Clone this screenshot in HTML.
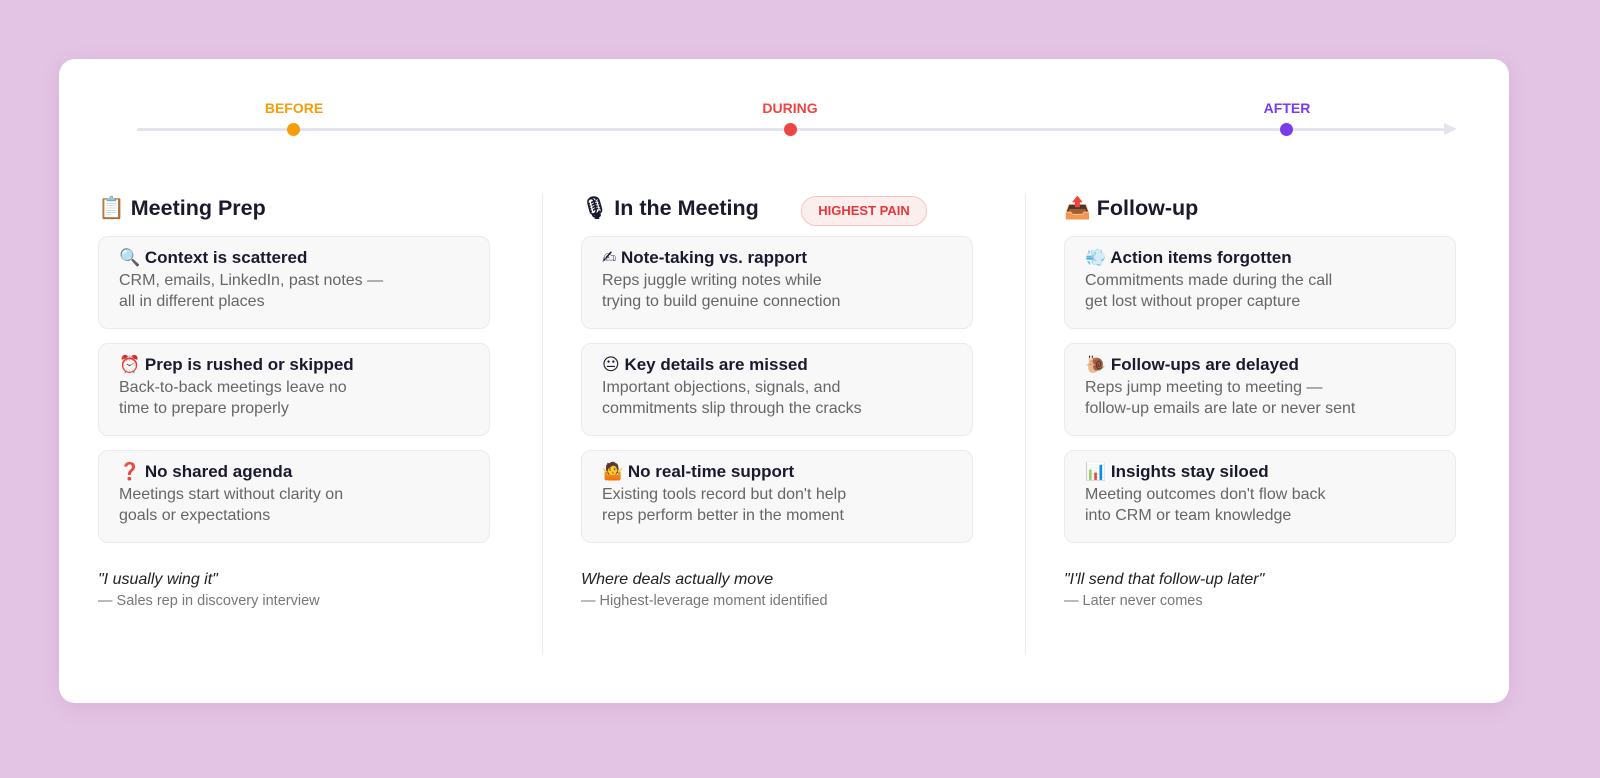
<!DOCTYPE html>
<html><head><meta charset="utf-8"><style>
*{margin:0;padding:0;box-sizing:border-box}
body{width:1600px;height:778px;background:#e4c4e4;font-family:"Liberation Sans","DejaVu Sans",sans-serif;position:relative;overflow:hidden}
.card{position:absolute;left:59px;top:59px;width:1450px;height:644px;background:#fff;border-radius:16px;box-shadow:0 4px 20px rgba(120,60,120,.12)}
.line{position:absolute;left:137px;top:128px;width:1310px;height:3px;background:#e5e3ee}
.arrow{position:absolute;left:1444px;top:123px;width:0;height:0;border-left:13px solid #e5e3ee;border-top:6px solid transparent;border-bottom:6px solid transparent}
.dot{position:absolute;top:123px;width:13px;height:13px;border-radius:50%}
.lab{position:absolute;top:100px;font-size:14px;font-weight:bold;width:120px;text-align:center}
.col{position:absolute;top:194px;width:392px}
.h{font-size:21.5px;font-weight:bold;color:#1a1a2e;height:28px;line-height:28px}
.c{margin-top:14px;height:93px;background:#f8f8f9;border:1px solid #ebebee;border-radius:10px;padding:10px 20px}
.col .c:first-of-type{margin-top:14px}
.t{font-size:17px;font-weight:bold;color:#1a1a2e;line-height:22px}
.d{font-size:16px;color:#666;line-height:21px;margin-top:1px}
.q{margin-top:27px;font-size:16px;font-style:italic;color:#222;line-height:20px}
.a{font-size:14.5px;color:#777;line-height:22px}
.div{position:absolute;top:193px;width:1px;height:462px;background:#ececf0}
.badge{position:absolute;left:801px;top:196px;width:126px;height:30px;border-radius:15px;background:#fdeeee;border:1px solid #f6c3c3;color:#e5383b;font-size:13px;font-weight:bold;text-align:center;line-height:28px}
</style></head><body>
<div class="card"></div>
<div class="line"></div><div class="arrow"></div>
<div class="lab" style="left:234px;color:#f59e0b">BEFORE</div>
<div class="lab" style="left:730px;color:#ef4444">DURING</div>
<div class="lab" style="left:1227px;color:#7c3aed">AFTER</div>
<div class="dot" style="left:287px;background:#f59e0b"></div>
<div class="dot" style="left:784px;background:#ef4444"></div>
<div class="dot" style="left:1280px;background:#7c3aed"></div>
<div class="div" style="left:542px"></div>
<div class="div" style="left:1025px"></div>
<div class="badge">HIGHEST PAIN</div>

<div class="col" style="left:98px">
<div class="h">📋 Meeting Prep</div>
<div class="c"><div class="t">🔍 Context is scattered</div><div class="d">CRM, emails, LinkedIn, past notes —<br>all in different places</div></div>
<div class="c"><div class="t">⏰ Prep is rushed or skipped</div><div class="d">Back-to-back meetings leave no<br>time to prepare properly</div></div>
<div class="c"><div class="t"><span style="color:#e53935">❓</span> No shared agenda</div><div class="d">Meetings start without clarity on<br>goals or expectations</div></div>
<div class="q">"I usually wing it"</div><div class="a">— Sales rep in discovery interview</div>
</div>

<div class="col" style="left:581px">
<div class="h">🎙 In the Meeting</div>
<div class="c"><div class="t">✍ Note-taking vs. rapport</div><div class="d">Reps juggle writing notes while<br>trying to build genuine connection</div></div>
<div class="c"><div class="t">😐 Key details are missed</div><div class="d">Important objections, signals, and<br>commitments slip through the cracks</div></div>
<div class="c"><div class="t">🤷 No real-time support</div><div class="d">Existing tools record but don't help<br>reps perform better in the moment</div></div>
<div class="q">Where deals actually move</div><div class="a">— Highest-leverage moment identified</div>
</div>

<div class="col" style="left:1064px">
<div class="h">📤 Follow-up</div>
<div class="c"><div class="t">💨 Action items forgotten</div><div class="d">Commitments made during the call<br>get lost without proper capture</div></div>
<div class="c"><div class="t">🐌 Follow-ups are delayed</div><div class="d">Reps jump meeting to meeting —<br>follow-up emails are late or never sent</div></div>
<div class="c"><div class="t">📊 Insights stay siloed</div><div class="d">Meeting outcomes don't flow back<br>into CRM or team knowledge</div></div>
<div class="q">"I'll send that follow-up later"</div><div class="a">— Later never comes</div>
</div>
</body></html>
